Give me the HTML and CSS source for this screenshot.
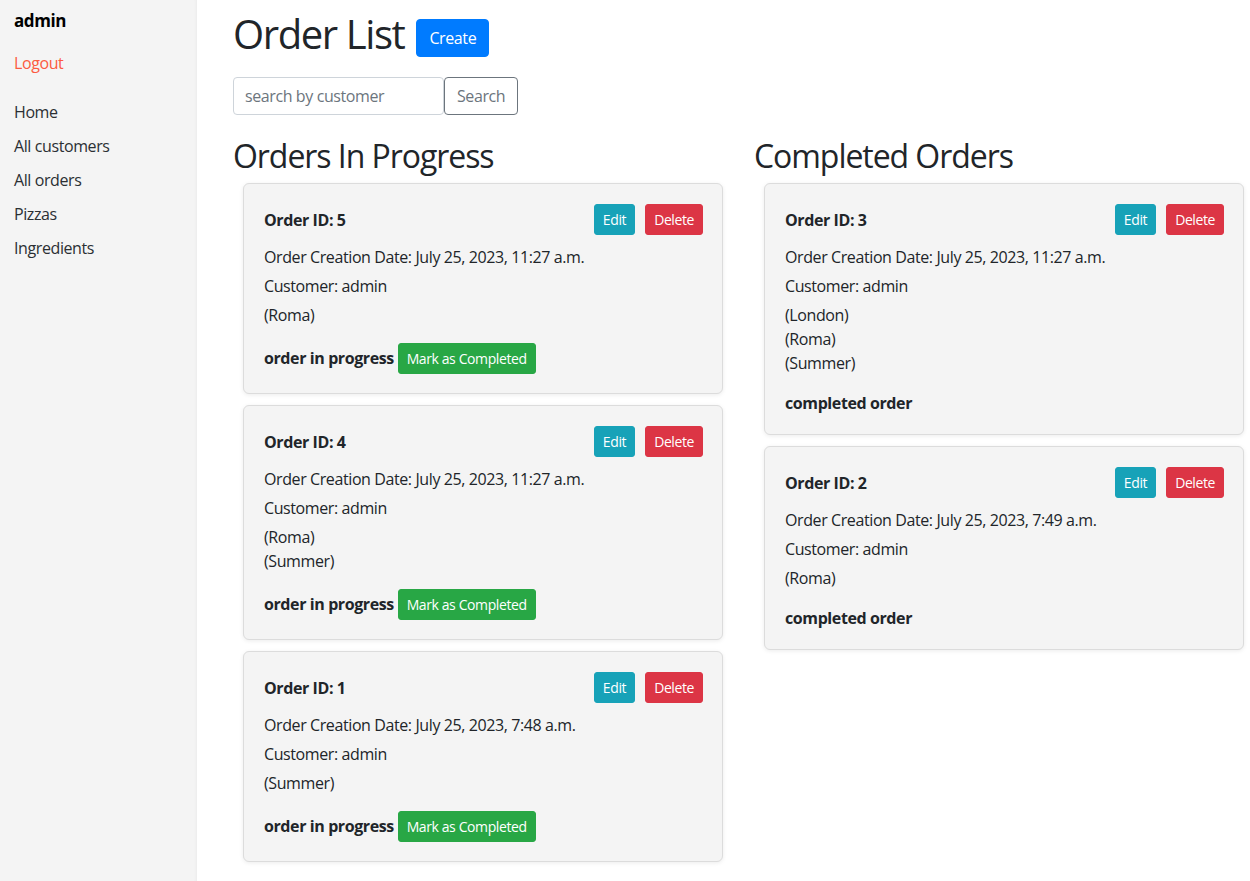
FILE: index.html
```html
<!DOCTYPE html>
<html lang="en">
<head>
<meta charset="utf-8">
<title>Order List</title>
<link rel="stylesheet" href="styles.css">
</head>
<body>
<aside class="sidebar">
  <div class="user">admin</div>
  <a class="logout" href="#">Logout</a>
  <nav class="nav">
    <a href="#">Home</a>
    <a href="#">All customers</a>
    <a href="#">All orders</a>
    <a href="#">Pizzas</a>
    <a href="#">Ingredients</a>
  </nav>
</aside>
<main class="main">
  <div class="title-row">
    <h1>Order List</h1>
    <a class="btn btn-primary" href="#">Create</a>
  </div>
  <form class="search">
    <input type="text" placeholder="search by customer">
    <button type="button" class="btn btn-outline">Search</button>
  </form>
  <div class="columns">
    <section class="col">
      <h2>Orders In Progress</h2>
      <div class="card">
        <div class="card-head"><strong>Order ID: 5</strong><div class="actions"><a class="btn btn-sm btn-info" href="#">Edit</a><a class="btn btn-sm btn-danger" href="#">Delete</a></div></div>
        <p>Order Creation Date: July 25, 2023, 11:27 a.m.</p>
        <p>Customer: admin</p>
        <div class="pizzas"><div>(Roma)</div></div>
        <div class="status"><strong>order in progress</strong> <a class="btn btn-sm btn-success" href="#">Mark as Completed</a></div>
      </div>
      <div class="card">
        <div class="card-head"><strong>Order ID: 4</strong><div class="actions"><a class="btn btn-sm btn-info" href="#">Edit</a><a class="btn btn-sm btn-danger" href="#">Delete</a></div></div>
        <p>Order Creation Date: July 25, 2023, 11:27 a.m.</p>
        <p>Customer: admin</p>
        <div class="pizzas"><div>(Roma)</div><div>(Summer)</div></div>
        <div class="status"><strong>order in progress</strong> <a class="btn btn-sm btn-success" href="#">Mark as Completed</a></div>
      </div>
      <div class="card">
        <div class="card-head"><strong>Order ID: 1</strong><div class="actions"><a class="btn btn-sm btn-info" href="#">Edit</a><a class="btn btn-sm btn-danger" href="#">Delete</a></div></div>
        <p>Order Creation Date: July 25, 2023, 7:48 a.m.</p>
        <p>Customer: admin</p>
        <div class="pizzas"><div>(Summer)</div></div>
        <div class="status"><strong>order in progress</strong> <a class="btn btn-sm btn-success" href="#">Mark as Completed</a></div>
      </div>
    </section>
    <section class="col">
      <h2>Completed Orders</h2>
      <div class="card">
        <div class="card-head"><strong>Order ID: 3</strong><div class="actions"><a class="btn btn-sm btn-info" href="#">Edit</a><a class="btn btn-sm btn-danger" href="#">Delete</a></div></div>
        <p>Order Creation Date: July 25, 2023, 11:27 a.m.</p>
        <p>Customer: admin</p>
        <div class="pizzas"><div>(London)</div><div>(Roma)</div><div>(Summer)</div></div>
        <div class="status"><strong>completed order</strong></div>
      </div>
      <div class="card">
        <div class="card-head"><strong>Order ID: 2</strong><div class="actions"><a class="btn btn-sm btn-info" href="#">Edit</a><a class="btn btn-sm btn-danger" href="#">Delete</a></div></div>
        <p>Order Creation Date: July 25, 2023, 7:49 a.m.</p>
        <p>Customer: admin</p>
        <div class="pizzas"><div>(Roma)</div></div>
        <div class="status"><strong>completed order</strong></div>
      </div>
    </section>
  </div>
</main>
</body>
</html>
```
FILE: styles.css
```css
* { box-sizing: border-box; }
html, body { height: 100%; }
body {
  margin: 0;
  display: flex;
  font-family: "Open Sans", "Noto Sans", sans-serif;
  font-size: 16px;
  line-height: 1.5;
  letter-spacing: -0.025em;
  color: #212529;
  background: #fff;
}
.sidebar {
  width: 197px;
  flex: none;
  min-height: 100%;
  background: #f4f4f4;
  padding: 9px 14px;
  box-shadow: inset -4px 0 4px -4px rgba(0,0,0,0.06);
}
.user {
  font-weight: 700;
  font-size: 17px;
  color: #000;
  line-height: 24px;
}
.logout {
  display: block;
  margin-top: 18px;
  color: #fc5b41;
  text-decoration: none;
  line-height: 24px;
}
.nav {
  display: flex;
  flex-direction: column;
  gap: 10px;
  margin-top: 25px;
}
.nav a {
  color: #2b2f33;
  text-decoration: none;
  line-height: 24px;
}
.main {
  flex: 1;
  padding: 10px 0 0 36px;
}
.title-row {
  display: flex;
  align-items: center;
  gap: 12px;
}
h1 {
  margin: 0;
  font-size: 40px;
  font-weight: 500;
  line-height: 48px;
  letter-spacing: -0.035em;
}
.btn {
  display: inline-block;
  font-family: inherit;
  font-size: 16px;
  line-height: 24px;
  letter-spacing: inherit;
  padding: 6px 12px;
  border: 1px solid transparent;
  border-radius: 4px;
  text-decoration: none;
  color: #fff;
  cursor: pointer;
  background: none;
}
.btn-primary { background: #007bff; border-color: #007bff; margin-top: 8px; }
.btn-outline { color: #6c757d; border-color: #6c757d; background: #fff; }
.btn-sm { font-size: 14px; line-height: 21px; padding: 4px 8px; border-radius: 3px; }
.btn-info { background: #17a2b8; border-color: #17a2b8; }
.btn-danger { background: #dc3545; border-color: #dc3545; }
.btn-success { background: #28a745; border-color: #28a745; }
.search {
  display: flex;
  margin-top: 19px;
}
.search input {
  width: 211px;
  height: 38px;
  font-family: inherit;
  font-size: 16px;
  letter-spacing: inherit;
  padding: 6px 11px;
  border: 1px solid #ced4da;
  border-radius: 4px;
  color: #495057;
}
.search input::placeholder { color: #6c757d; }
.search .btn { height: 38px; }
.columns {
  display: flex;
  margin-top: 22px;
}
.col { width: 521px; flex: none; }
h2 {
  margin: 0 0 8px;
  font-size: 32px;
  font-weight: 500;
  line-height: 38px;
  letter-spacing: -0.033em;
}
.card {
  width: 480px;
  margin: 0 0 11px 10px;
  background: #f4f4f4;
  border: 1px solid #dcdcdc;
  border-radius: 6px;
  box-shadow: 0 1px 4px rgba(0,0,0,0.08);
  padding: 20px 19px 19px 20px;
}
.card-head {
  display: flex;
  justify-content: space-between;
  align-items: center;
  margin-bottom: 10px;
}
.actions { display: flex; gap: 10px; }
.card p { margin: 0 0 5px; }
.status { margin-top: 16px; }
```
